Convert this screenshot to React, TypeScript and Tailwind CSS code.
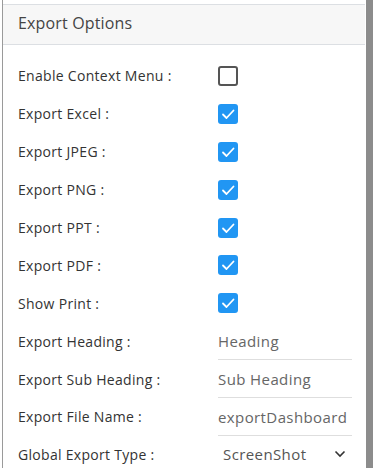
import React from "react";

const checks: [string, boolean][] = [
  ["Enable Context Menu :", false],
  ["Export Excel :", true],
  ["Export JPEG :", true],
  ["Export PNG :", true],
  ["Export PPT :", true],
  ["Export PDF :", true],
  ["Show Print :", true],
];

const inputs: [string, string][] = [
  ["Export Heading :", "Heading"],
  ["Export Sub Heading :", "Sub Heading"],
  ["Export File Name :", "exportDashboard"],
];

function Check({ on }: { on: boolean }) {
  if (!on)
    return <div className="w-[20px] h-[20px] shrink-0 rounded-[3px] border-2 border-[#555] bg-white" />;
  return (
    <div className="w-[20px] h-[20px] shrink-0 rounded-[3px] bg-[#2196f3] flex items-center justify-center">
      <svg width="14" height="14" viewBox="0 0 14 14" fill="none">
        <path d="M2 7.5 L5.5 11 L12.5 3.5" stroke="white" strokeWidth="1.8" strokeLinecap="round" strokeLinejoin="round" />
      </svg>
    </div>
  );
}

export default function App() {
  return (
    <div className="w-[373px] h-[468px] bg-white flex overflow-hidden" style={{ fontFamily: "'Open Sans', Lato, sans-serif" }}>
      <div className="w-[2px] shrink-0" />
      <div className="flex-1 flex flex-col pt-[4px] border-l border-[#9a9a9a] min-h-0">
        <div className="h-[41px] shrink-0 bg-[#f7f7f7] border-y border-[#dcdfe3] flex items-center pb-[3px] pl-[15px] text-[16px] tracking-[0.15px] text-[#444]">
          Export Options
        </div>
        <div className="flex flex-col pt-[12px] shrink-0">
          {checks.map(([l, on]) => (
            <div key={l} className="h-[37.9px] shrink-0 flex items-center pl-[15px]">
              <div className="w-[200px] text-[14px] tracking-[0.3px] text-[#333]">{l}</div>
              <Check on={on} />
            </div>
          ))}
          {inputs.map(([l, v]) => (
            <div key={l} className="h-[37.9px] shrink-0 flex items-center pl-[15px]">
              <div className="w-[200px] text-[14px] tracking-[0.3px] text-[#333]">{l}</div>
              <div className="w-[134px] h-full flex items-center border-b border-[#dedede] pt-[1px] text-[15px] tracking-[0.4px] text-[#666]">{v}</div>
            </div>
          ))}
          <div className="h-[37.9px] shrink-0 flex items-center pl-[15px]">
            <div className="w-[200px] text-[14px] tracking-[0.3px] text-[#333]">Global Export Type :</div>
            <div className="w-[134px] h-full flex items-center justify-between border-b border-[#dedede] pl-[5px] pr-[6px] text-[15px] tracking-[0.4px] text-[#555]">
              <span>ScreenShot</span>
              <svg width="12" height="8" viewBox="0 0 12 8" fill="none">
                <path d="M1.5 1.5 L6 6 L10.5 1.5" stroke="#333" strokeWidth="1.6" />
              </svg>
            </div>
          </div>
        </div>
      </div>
      <div className="w-[7px] shrink-0 bg-[#8c8c8c] ml-[1px]" />
    </div>
  );
}
